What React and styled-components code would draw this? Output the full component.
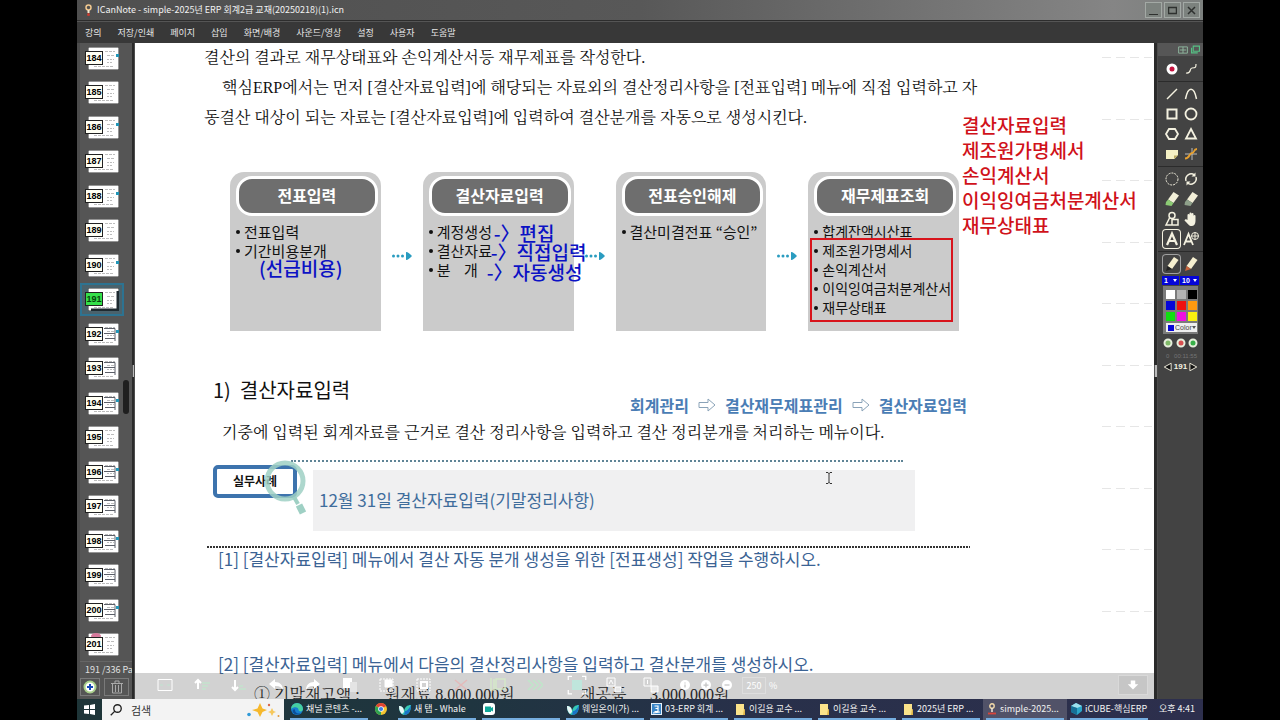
import React from "react";
import styled, { createGlobalStyle } from "styled-components";

const GlobalStyle = createGlobalStyle`
  * {
    box-sizing: border-box;
  }
  body {
    margin: 0;
    background: #000;
    font-family: "Noto Sans CJK KR", sans-serif;
  }
  button,
  select,
  input {
    font-family: inherit;
    padding: 0;
    margin: 0;
    border: none;
    background: none;
    color: inherit;
    border-radius: 0;
  }
  svg {
    display: block;
  }
`;

const Shell = styled.div`
  height: 100vh;
  margin: 0 77px;
  display: flex;
  flex-direction: column;
  overflow: hidden;
  background: #434343;
`;

const TitleBar = styled.header`
  flex: none;
  height: 21px;
  display: flex;
  align-items: center;
  gap: 4px;
  padding: 0 3px 0 7px;
  color: #f2f2f2;
  background: linear-gradient(90deg, #4f4f4f 0%, #585858 50%, #858585 92%, #7b7f7d 100%);
  border-bottom: 1px solid #2d2d2d;
`;

const Title = styled.h1`
  flex: 1;
  margin: 0;
  font-size: 9px;
  font-weight: 400;
  line-height: 20px;
  white-space: nowrap;
`;

const WindowButton = styled.button`
  width: 17px;
  height: 16px;
  margin-left: -2px;
  border: 1px solid #a3a9a5;
  background: #7c827e;
  color: #2e312f;
  display: flex;
  align-items: center;
  justify-content: center;
`;

const MenuBar = styled.nav`
  flex: none;
  height: 22px;
  display: flex;
  align-items: center;
  gap: 16px;
  padding: 0 8px;
  background: #383838;
  border-top: 1px solid #555;
`;

const MenuItem = styled.button`
  color: #e6e6e6;
  font-size: 9px;
  line-height: 20px;
`;

const Body = styled.div`
  flex: 1;
  min-height: 0;
  display: flex;
`;

const Sidebar = styled.aside`
  position: relative;
  flex: none;
  width: 55px;
  background: #555;
  border-left: 3px solid #4b4b4b;
  display: flex;
  flex-direction: column;
`;

const ThumbList = styled.div`
  flex: 1;
  display: flex;
  flex-direction: column;
  justify-content: space-between;
  padding: 4px 13px 5px 5px;
`;

const Thumb = styled.button`
  position: relative;
  width: 34px;
  height: 23px;
  padding-left: 3px;
  outline: ${(p) => (p.$active ? "2px solid #2d7391" : "none")};
  outline-offset: 3px;
  background: ${(p) => (p.$active ? "#4a626c" : "none")};
  box-shadow: ${(p) => (p.$active ? "0 0 0 3px #4a626c" : "none")};
`;

const ThumbNumber = styled.span`
  position: absolute;
  left: 0;
  top: 4px;
  width: 18px;
  height: 14px;
  border: 1px solid #222;
  background: ${(p) => (p.$active ? "#35e04a" : "#fffff4")};
  color: ${(p) => (p.$active ? "#06420c" : "#000")};
  font: bold 9px/12px "Liberation Sans", sans-serif;
  text-align: center;
`;

const ScrollHandle = styled.div`
  position: absolute;
  right: 3px;
  top: 337px;
  width: 6px;
  height: 34px;
  border-radius: 3px;
  background: #1f1f1f;
`;

const PageCount = styled.div`
  height: 16px;
  padding-left: 5px;
  border-top: 1px solid #666;
  color: #e0e0e0;
  font-size: 9px;
  line-height: 15px;
  white-space: nowrap;
  overflow: hidden;
`;

const SidebarButtons = styled.div`
  height: 22px;
  display: flex;
  gap: 4px;
  padding: 1px 3px 3px 0;
`;

const SidebarButton = styled.button`
  width: ${(p) => p.$width}px;
  border: 1px solid #7a7a7a;
  display: flex;
  align-items: center;
  justify-content: center;
`;

const Divider = styled.div`
  flex: none;
  width: ${(p) => p.$width}px;
  background: #2a2a2a;
  border-right: 1px solid #4c4c4c;
  display: flex;
  align-items: center;
  justify-content: center;
  &::before {
    content: "";
    width: 3px;
    height: 12px;
    background: #bbb;
    border-left: 1px solid #555;
  }
`;

const Page = styled.main`
  position: relative;
  flex: 1;
  min-width: 0;
  overflow: hidden;
  background: #fff;
  padding-left: 69px;
  color: #111;
`;

const Column = styled.div`
  width: 766px;
`;

const Para = styled.p`
  margin: 0;
  padding-left: ${(p) => (p.$indent ? 18 : 0)}px;
  font: 16px/30px "Liberation Serif", "Noto Serif CJK KR", "Noto Sans CJK KR", serif;
  white-space: nowrap;
`;

const Process = styled.section`
  display: flex;
  align-items: stretch;
  margin: 39px 11px 0 26px;
`;

const Card = styled.div`
  position: relative;
  flex: 1;
  height: 159px;
  padding: 4px 3px 0 6px;
  border-radius: 14px 14px 0 0;
  background: #cbcbcb;
`;

const CardTitle = styled.h2`
  margin: 0;
  height: 40px;
  border: 3px solid #fff;
  border-radius: 16px;
  background: #6e6e6e;
  color: #fff;
  font-size: 16px;
  line-height: 32px;
  text-align: center;
`;

const CardList = styled.ul`
  margin: 6px 0 0;
  padding: 0;
  list-style: none;
  font-size: ${(p) => (p.$dense ? 14 : 15)}px;
  line-height: 19px;
  color: #111;
  white-space: pre;
`;

const CardItem = styled.li`
  display: flex;
  align-items: center;
  gap: 4px;
  &::before {
    content: "";
    width: 4px;
    height: 4px;
    border-radius: 50%;
    background: #111;
  }
`;

const Arrow = styled.div`
  flex: none;
  width: 42px;
  padding-top: 8px;
  display: flex;
  align-items: center;
  justify-content: center;
`;

const Note = styled.div`
  position: absolute;
  z-index: 1;
  left: ${(p) => p.$left}px;
  top: ${(p) => p.$top}px;
  color: ${(p) => p.$color};
  font-size: 19px;
  font-weight: 500;
  line-height: ${(p) => p.$line}px;
  white-space: nowrap;
`;

const NoteFrame = styled.div`
  position: absolute;
  left: 2px;
  top: 66px;
  width: 143px;
  height: 84px;
  border: 2px solid #d8141c;
`;

const HeadingRow = styled.div`
  display: flex;
  justify-content: space-between;
  height: 42px;
  margin: 45px 3px 0 9px;
`;

const Heading = styled.h2`
  margin: 0;
  font-size: 20px;
  font-weight: 400;
  line-height: 28px;
  white-space: pre;
`;

const Crumbs = styled.nav`
  align-self: flex-end;
  display: flex;
  align-items: center;
  gap: 9px;
  color: #4a7db5;
  font-size: 16px;
  font-weight: 700;
  line-height: 26px;
`;

const Example = styled.section`
  position: relative;
  display: flex;
  margin: 12px 67px 0 9px;
`;

const ExampleRule = styled.div`
  position: absolute;
  left: 78px;
  right: 0;
  top: 0;
  border-top: 2px dotted #5f8496;
`;

const Badge = styled.div`
  position: relative;
  flex: none;
  width: 84px;
  height: 33px;
  margin: 5px 16px 0 0;
  border: 4px solid #3d73ad;
  border-radius: 5px;
  background: #fff;
  color: #111;
  font-size: 12px;
  font-weight: 700;
  line-height: 24px;
  text-align: center;
`;

const Lens = styled.svg`
  position: absolute;
  left: 44px;
  top: -12px;
`;

const ExampleBox = styled.div`
  flex: none;
  width: 602px;
  height: 61px;
  margin-top: 10px;
  padding-left: 6px;
  background: #f0f0f1;
  color: #3f6d9c;
  font-size: 17px;
  line-height: 60px;
  white-space: nowrap;
`;

const Rule = styled.div`
  height: 2px;
  margin: 15px 0 0 3px;
  background: repeating-linear-gradient(90deg, #333 0 2px, #fff 2px 3px);
`;

const Task = styled.p`
  margin: 0 0 83px;
  padding-left: 14px;
  color: #3b6394;
  font-size: 17px;
  line-height: 22px;
  white-space: nowrap;
`;

const Stock = styled.div`
  display: grid;
  grid-template-columns: 131px 195px 70px 1fr;
  margin: -77px 0 0 50px;
  font: 16px/28px "Liberation Serif", "Noto Serif CJK KR", "Noto Sans CJK KR", serif;
  white-space: pre;
`;

const Guides = styled.div`
  position: absolute;
  right: 2px;
  top: 14px;
  width: 50px;
  height: 555px;
  display: flex;
  flex-direction: column;
  justify-content: space-between;
`;

const Guide = styled.div`
  height: 1px;
  background: repeating-linear-gradient(90deg, #e6e6e6 0 9px, transparent 9px 14px);
`;

const PageTools = styled.div`
  position: absolute;
  left: 0;
  right: 0;
  bottom: 0;
  height: 26px;
  display: flex;
  align-items: center;
  gap: 5px;
  padding: 0 6px 2px 11px;
  background: rgba(80, 80, 80, 0.26);
  color: #fff;
`;

const ToolGroup = styled.div`
  flex: none;
  display: flex;
`;

const PageTool = styled.button`
  width: ${(p) => (p.$small ? 21 : 37)}px;
  height: 22px;
  display: flex;
  align-items: center;
  justify-content: center;
`;

const ZoomLabel = styled.label`
  flex: 1;
  display: flex;
  align-items: center;
  gap: 3px;
  font-size: 9px;
`;

const ZoomInput = styled.input`
  width: 24px;
  height: 17px;
  border: 1px solid #dedede;
  font-size: 9px;
  text-align: center;
`;

const DownButton = styled.button`
  width: 30px;
  height: 20px;
  background: #c6c6c6;
  border: 1px solid #d9d9d9;
  display: flex;
  align-items: center;
  justify-content: center;
`;

const TextCursor = styled.svg`
  position: absolute;
  left: 690px;
  top: 429px;
`;

const Palette = styled.aside`
  flex: none;
  width: 45px;
  background: #434343;
  color: #f4f1e0;
`;

const PaletteHeader = styled.div`
  height: 13px;
  display: flex;
  align-items: center;
  justify-content: flex-end;
  gap: 3px;
  padding-right: 3px;
  margin-bottom: 3px;
  background: #565656;
`;

const ToolGrid = styled.div`
  display: grid;
  grid-template-columns: 19px 19px;
  padding: 0 4px 2px;
  margin-bottom: 2px;
  border-bottom: ${(p) => (p.$last ? "none" : "1px solid #2b2b2b")};
`;

const Tool = styled.button`
  height: 20px;
  display: flex;
  align-items: center;
  justify-content: center;
  border-radius: 4px;
  box-shadow: ${(p) => (p.$on ? "inset 0 0 0 1px " + p.$on : "none")};
`;

const Picks = styled.div`
  display: grid;
  grid-template-columns: 17px 19px;
  gap: 1px;
  margin: -2px 4px 1px;
`;

const Pick = styled.label`
  position: relative;
  height: 9px;
  display: flex;
  align-items: center;
  background: ${(p) => (p.$light ? "#efefef" : "#0505d8")};
  color: ${(p) => (p.$light ? "#444" : "#fff")};
  svg {
    position: absolute;
    right: 2px;
  }
`;

const PickSelect = styled.select`
  appearance: none;
  width: 100%;
  height: 9px;
  padding-left: ${(p) => (p.$light ? 1 : 2)}px;
  font: 7px/9px "Liberation Sans", sans-serif;
  font-weight: ${(p) => (p.$light ? 400 : 700)};
`;

const Swatches = styled.div`
  display: grid;
  grid-template-columns: repeat(3, 9px);
  gap: 2px;
  padding: 4px 2px 2px 3px;
  margin: 0 5px;
  background: #7b7b7b;
`;

const Swatch = styled.button`
  height: 9px;
  background: ${(p) => p.$color};
`;

const ColorRow = styled.div`
  grid-column: 1 / -1;
  display: flex;
  align-items: center;
  background: #efefef;
  padding-left: 2px;
  &::before {
    content: "";
    width: 6px;
    height: 6px;
    background: #0505d8;
  }
`;

const Dots = styled.div`
  display: flex;
  justify-content: space-between;
  padding: 4px 5px 3px;
`;

const Timer = styled.div`
  display: flex;
  justify-content: space-between;
  padding: 0 6px 0 8px;
  font: 6px/10px "Liberation Sans", sans-serif;
  color: #747474;
`;

const Pager = styled.div`
  display: flex;
  align-items: center;
  justify-content: space-between;
  padding: 1px 5px;
  font: bold 8px/10px "Liberation Sans", sans-serif;
`;

const Taskbar = styled.footer`
  flex: none;
  height: 21px;
  display: flex;
  background: linear-gradient(90deg, #1e3538 0%, #1f3540 35%, #28304a 60%, #2d2f4d 100%);
  color: #f2f2f2;
`;

const StartButton = styled.button`
  width: 25px;
  display: flex;
  align-items: center;
  justify-content: center;
`;

const SearchBox = styled.label`
  flex: none;
  width: 182px;
  margin-right: 6px;
  display: flex;
  align-items: center;
  gap: 9px;
  padding: 0 4px 0 8px;
  background: #f3f3f3;
  color: #222;
`;

const SearchInput = styled.input`
  flex: 1;
  min-width: 0;
  font-size: 11px;
  line-height: 18px;
  &::placeholder {
    color: #333;
    opacity: 1;
  }
`;

const TaskButton = styled.button`
  flex: none;
  width: ${(p) => (p.$icon ? 18 : 78)}px;
  margin-right: 6px;
  display: flex;
  align-items: center;
  gap: 3px;
  padding: 0 0 0 1px;
  border-bottom: 2px solid ${(p) => (p.$icon ? "transparent" : "#76aee0")};
  background: ${(p) => (p.$active ? "#515268" : "none")};
  box-shadow: ${(p) => (p.$active ? "0 0 0 3px #515268" : "none")};
  font-size: 9px;
  line-height: 18px;
  white-space: nowrap;
  svg {
    flex: none;
  }
`;

const Clock = styled.time`
  margin: 0 8px 0 auto;
  font-size: 9px;
  line-height: 19px;
  white-space: nowrap;
`;

const MENU = ["강의", "저장/인쇄", "페이지", "삽입", "화면/배경", "사운드/영상", "설정", "사용자", "도움말"];

const PAGES = Array.from({ length: 18 }, (_, i) => 184 + i);
const MARKED = [184, 186, 188, 190, 192, 194, 196, 198, 200];
const TABLES = [192, 193, 194, 196, 197, 198, 199, 200];

const COLORS = ["#ffffff", "#b4b4b4", "#000000", "#0505d8", "#f01010", "#ff9a10", "#10e010", "#f010e0", "#f8f010"];

const stroke = { fill: "none", stroke: "currentColor", strokeWidth: 1.5 };

function Icon({ size = 16, children, ...rest }) {
  return (
    <svg width={size} height={size} viewBox="0 0 16 16" {...stroke} aria-hidden="true" {...rest}>
      {children}
    </svg>
  );
}

// the shaft runs from top right to the tip at bottom left
function Pencil({ tip, body = "#f6f0d0" }) {
  return (
    <Icon stroke="none">
      <path d="M10 1 L14.5 4 L8 13 L3.5 10 Z" fill={body} />
      <path d="M3.5 10 L8 13 L2 15 Z" fill={tip} />
    </Icon>
  );
}

function Eraser({ tip }) {
  return (
    <Icon stroke="none">
      <path d="M9.500 1 L15 4.500 L9.500 12 L4 8.500 Z" fill="#f2efd8" />
      <path d="M4 8.500 L9.500 12 L7.500 15 L1.500 14 L2 11 Z" fill={tip} />
    </Icon>
  );
}

const drawTools = [
  ["선", <Icon><path d="M3 13 L13 3" /></Icon>],
  ["곡선", <Icon><path d="M2.500 13 C5 0 11 0 13.500 13" /></Icon>],
  ["사각형", <Icon strokeWidth="2"><path d="M3.500 3.500 H12.500 V12.500 H3.500 Z" /></Icon>],
  ["원", <Icon strokeWidth="1.800"><circle cx="8" cy="8" r="5.500" /></Icon>],
  ["육각형", <Icon strokeWidth="1.800"><path d="M5 3 H11 L14 8 L11 13 H5 L2 8 Z" /></Icon>],
  ["삼각형", <Icon strokeWidth="1.800"><path d="M8 3 L13 12.500 H3 Z" /></Icon>],
  ["메모", <Icon stroke="none"><path d="M2 4 H14 V9 L10.500 13 H2 Z" fill="#f4f0c4" /><path d="M10 13 V9.500 H14" fill="#b8a860" /></Icon>],
  ["그래프", <Icon strokeWidth="1"><path d="M9 2 V14 M2 8 H14" stroke="#bbb" /><path d="M2 12.500 C7 12.500 6 7 9 7 S10 3 14 3" stroke="#e6a030" strokeWidth="1.800" /></Icon>],
];

const editTools = [
  ["영역 선택", <Icon strokeWidth="1"><circle cx="8" cy="8" r="6" strokeDasharray="2 1" /></Icon>],
  ["회전", <Icon><path d="M3 10 A5.500 5.500 0 0 1 11.500 4 M13 6 A5.500 5.500 0 0 1 4.500 12" /><path d="M12.500 1.500 V5.500 H8.500 Z M3.500 14.500 V10.500 H7.500 Z" fill="currentColor" stroke="none" /></Icon>],
  ["지우개", <Eraser tip="#8ccb74" />],
  ["부분 지우개", <Eraser tip="#8ea08a" />],
  ["도형", <Icon strokeWidth="1.500"><circle cx="8" cy="4.500" r="3" /><path d="M5.500 7 L2 14 H8 M8 8.500 H14 V14 H8 Z" /></Icon>],
  ["손", <Icon stroke="none" fill="currentColor"><path d="M4.500 9 V4 a1 1 0 0 1 2 0 V7 V2.500 a1 1 0 0 1 2 0 V7 V3 a1 1 0 0 1 2 0 V8 V5 a1 1 0 0 1 2 0 V10 C12.500 13 11 15 8.500 15 C6 15 5 13 1.500 9.500 C2 8 3.500 8 4.500 9 Z" /></Icon>],
  ["글자", <Icon strokeWidth="2.200"><path d="M3 14 L8 2.500 L13 14 M5 10 H11" /></Icon>, "#f4f1e0"],
  ["웹 글자", <Icon strokeWidth="1.800"><path d="M1 14 L5.500 3 L10 14 M3 10.500 H8" /><circle cx="12" cy="5" r="3.500" strokeWidth="1" /><path d="M8.500 5 H15.500 M12 1.500 V8.500" strokeWidth="1" /></Icon>],
];

const pageTools = [
  ["폭 맞춤", <Icon strokeWidth="1"><path d="M1 2.500 H15 V13.500 H1 Z" /><path d="M3 8 H6 M10 8 H13" stroke="#bfe3cf" /></Icon>],
  ["위로", <Icon><path d="M4 12 V4 M1 6 L4 3 L7 6" strokeWidth="2" /><path d="M8 6 H16 M8 9 H14 M8 12 H12" stroke="#c4e3cd" /></Icon>],
  ["아래로", <Icon><path d="M4 3 V12 M1 10 L4 13 L7 10" strokeWidth="2" /><path d="M8 12 H15 M8 9 H12" stroke="#c4e3cd" /></Icon>],
  ["실행 취소", <Icon stroke="none" fill="currentColor"><path d="M7 2 L1 7 L7 12 V9 C11 8.500 13 10 15 13 C15 8 12 5 7 5 Z" /></Icon>],
  ["다시 실행", <Icon stroke="none" fill="currentColor"><path d="M9 2 L15 7 L9 12 V9 C5 8.500 3 10 1 13 C1 8 4 5 9 5 Z" /></Icon>],
  ["복사", <Icon stroke="none"><path d="M1 1 H10 V11 H1 Z" fill="#fff" /><path d="M8 5 H15 V15 H8 Z" fill="#e4e4e4" /></Icon>],
  ["붙여넣기", <Icon strokeWidth="1"><path d="M1 2 H14 V14 H1 Z" strokeDasharray="2 1" /><path d="M6 3 H13 V10 H6 Z" fill="#fff" /></Icon>],
  ["묶기", <Icon strokeWidth="1"><path d="M1 2 H14 V14 H1 Z" strokeDasharray="2 1" /><path d="M5 5 H11 V11 H5 Z" strokeWidth="2" /></Icon>],
  ["삭제", <Icon stroke="#e3b9b9"><path d="M2 3 L14 13 M14 3 L2 13" /></Icon>],
  ["페이지 복제", <Icon stroke="#d5e8c9"><path d="M1 1 V14 M4 2 V14 M6 2 H15 V12 H6 Z" /></Icon>],
  ["다음", <Icon stroke="#bfe6c9"><path d="M1 3 L6 8 L1 13 M6 3 L11 8 L6 13 M11 3 L16 8 L11 13" /></Icon>],
];

const viewTools = [
  ["전체 화면", <Icon size={20} strokeWidth="1"><path d="M1 4 V1 H4 M12 1 H15 V4 M15 12 V15 H12 M4 15 H1 V12" /><path d="M4 4 H12 V12 H4 Z" fill="#bfe6dc" stroke="none" /></Icon>],
  ["글자 정렬", <Icon strokeWidth="1"><path d="M1 1 H9 V9 H1 Z M3 7 L5 3 L7 7" /><path d="M9 10 H15 V15 H9 Z" fill="#e8e8e8" /></Icon>],
  ["번호 정렬", <Icon strokeWidth="1"><path d="M1 1 H8 V9 H1 Z M4.500 3 V7" /><path d="M8 9 H15 V15 H8 Z" fill="#e8e8e8" /></Icon>],
];

const roundTools = [
  ["정보", "M8 4 V5.500 M8 7 V12"],
  ["확대", "M8 4 V12 M4 8 H12"],
  ["축소", "M4 8 H12"],
];

function Caret({ color = "#fff" }) {
  return (
    <svg width="4" height="3" aria-hidden="true">
      <path d="M0 0 H4 L2 3 Z" fill={color} />
    </svg>
  );
}

function FlowArrow() {
  return (
    <Arrow>
      <svg width="20" height="8" fill="#2a9cc0" aria-hidden="true">
        <circle cx="1.500" cy="4" r="1.500" />
        <circle cx="6" cy="4" r="1.500" />
        <circle cx="10.500" cy="4" r="1.500" />
        <path d="M14 0 C16 0 18 2 20 4 C18 6 16 8 14 8 Z" />
      </svg>
    </Arrow>
  );
}

function CrumbArrow() {
  return (
    <svg width="18" height="14" fill="#fff" stroke="#8aa3b8" aria-hidden="true">
      <path d="M1 4.500 H10 V1 L17 7 L10 13 V9.500 H1 Z" />
    </svg>
  );
}

function ThumbImage({ n }) {
  return (
    <svg width="31" height="23" aria-hidden="true">
      <rect width="31" height="23" fill="#fff" stroke="#2a2a2a" />
      <g stroke="#bdbdbd" strokeWidth="1">
        <path d="M17 4.500 H27 M19 8.500 H27 M6 19.500 H26" strokeDasharray="3 1" />
        <path d="M19 12.500 H26 M19 15.500 H25" strokeDasharray="2 1" />
      </g>
      {TABLES.includes(n) && <path d="M16 5.500 H27 V18 M16 10.500 H27 M17 15.500 H27" fill="none" stroke="#5b5f68" />}
      {MARKED.includes(n) && <rect x="28" y="7" width="3" height="3" fill="#2196b8" />}
      {n === 201 && <ellipse cx="8" cy="3" rx="5" ry="3" fill="#d77a9b" />}
      {n === 191 && <path d="M3 22 H30 V3" fill="none" stroke="#1e2a30" strokeWidth="3" />}
    </svg>
  );
}

const Edge = () => (
  <svg width="12" height="12" viewBox="0 0 12 12" aria-hidden="true">
    <circle cx="6" cy="6" r="6" fill="#1680d0" />
    <path d="M0 6 A6 6 0 0 1 12 6 C12 9 8 9 7.500 7 C8 4 3 3 0 6 Z" fill="#46cfa0" />
    <path d="M4 7 C4 10 7 11.500 10 10 C8 12.500 2 12 1.500 8 C2 6 4 5.500 4 7 Z" fill="#0c4f98" />
  </svg>
);

const Chrome = () => (
  <svg width="12" height="12" viewBox="0 0 12 12" aria-hidden="true">
    <circle cx="6" cy="6" r="6" fill="#f4c531" />
    <path d="M6 6 L0.800 3 A6 6 0 0 1 11.200 3 Z" fill="#e04434" />
    <path d="M6 6 L0.800 3 A6 6 0 0 0 6 12 Z" fill="#2ea352" />
    <circle cx="6" cy="6" r="2.800" fill="#fff" />
    <circle cx="6" cy="6" r="2.100" fill="#3c7de6" />
  </svg>
);

const Whale = () => (
  <svg width="12" height="12" viewBox="0 0 12 12" aria-hidden="true">
    <path d="M0 3 C3 3 5 5 5 8 C6 4 8 2 12 2 C12 8 10 12 5 12 C1 11 0 7 0 3 Z" fill="#35c8b8" />
    <path d="M0 3 C3 3 5 5 5 9 L3 11 C1 9 0 7 0 3 Z" fill="#e8f6f6" />
    <path d="M6 8 C8 8 10 6 12 2 C12 9 9 12 5 12 Z" fill="#1a74c8" />
  </svg>
);

const Meet = () => (
  <svg width="12" height="12" viewBox="0 0 12 12" aria-hidden="true">
    <rect width="12" height="12" rx="3" fill="#fff" />
    <path d="M2 3.500 H8 V5 L10 4 V8.500 L8 7.500 V9 H2 Z" fill="#10a89a" />
  </svg>
);

const ErpBook = () => (
  <svg width="11" height="12" viewBox="0 0 11 12" aria-hidden="true">
    <rect width="11" height="12" fill="#e6f1fa" />
    <rect x="1" y="1" width="9" height="10" fill="#3a86c8" />
    <path d="M3.500 3 H7 V5.500 H4.500 M7 5.500 V8.500 H3.500 M2 10 L9 9" fill="none" stroke="#fff" strokeWidth="1.200" />
  </svg>
);

const Folder = () => (
  <svg width="11" height="12" viewBox="0 0 11 12" aria-hidden="true">
    <path d="M1 1 H9 V6 L10 7 V12 H1 Z" fill="#fbe38a" />
    <path d="M9 6 L10 7 V12 H8 Z" fill="#e0b64a" />
  </svg>
);

const NoteApp = () => (
  <svg width="10" height="12" viewBox="0 0 10 12" aria-hidden="true">
    <circle cx="5" cy="3" r="2.200" fill="none" stroke="#f1d9a8" strokeWidth="1.400" />
    <path d="M5 5 V9" stroke="#f0e8d8" strokeWidth="1.500" />
    <path d="M1 10.500 H9" stroke="#d8453a" strokeWidth="1.800" />
  </svg>
);

const Icube = () => (
  <svg width="11" height="12" viewBox="0 0 11 12" aria-hidden="true">
    <path d="M5 0 L11 3 V8 L6 12 L0 9 V3 Z" fill="#2aa5c8" />
    <path d="M5 0 L11 3 L6 5 L0 3 Z" fill="#9de0ee" />
    <path d="M6 5 V12 L0 9 V3 Z" fill="#176f96" />
  </svg>
);

const TASKS = [
  { icon: <Edge />, label: "채널 콘텐츠 -..." },
  { icon: <Chrome />, only: true },
  { icon: <Whale />, label: "새 탭 - Whale" },
  { icon: <Meet />, label: "" },
  { icon: <Whale />, label: "웨일온이(가) ..." },
  { icon: <ErpBook />, label: "03-ERP 회계 ..." },
  { icon: <Folder />, label: "이길용 교수 ..." },
  { icon: <Folder />, label: "이길용 교수 ..." },
  { icon: <Folder />, label: "2025년 ERP ..." },
  { icon: <NoteApp />, label: "simple-2025...", active: true },
  { icon: <Icube />, label: "iCUBE-핵심ERP" },
];

function PageSidebar() {
  return (
    <Sidebar>
      <ThumbList>
        {PAGES.map((n) => (
          <Thumb key={n} $active={n === 191}>
            <ThumbImage n={n} />
            <ThumbNumber $active={n === 191}>{n}</ThumbNumber>
          </Thumb>
        ))}
      </ThumbList>
      <ScrollHandle />
      <PageCount>191 /336 Pa</PageCount>
      <SidebarButtons>
        <SidebarButton $width={20} aria-label="페이지 추가">
          <svg width="14" height="14" viewBox="0 0 14 14" aria-hidden="true">
            <circle cx="7" cy="7" r="5.500" fill="#fff" stroke="#a9cf8b" strokeWidth="2" />
            <path d="M7 4 V10 M4 7 H10" stroke="#1548b8" strokeWidth="2" />
          </svg>
        </SidebarButton>
        <SidebarButton $width={25} aria-label="페이지 삭제">
          <svg width="14" height="14" viewBox="0 0 14 14" fill="none" stroke="#a9a9a9" aria-hidden="true">
            <path d="M1 3.500 H13 M5 3 V1 H9 V3 M2.500 4 V13 H11.500 V4 M5.500 5 V12 M8.500 5 V12" />
          </svg>
        </SidebarButton>
      </SidebarButtons>
    </Sidebar>
  );
}

function DocumentPage() {
  return (
    <Page>
      <Column>
        <Para>결산의 결과로 재무상태표와 손익계산서등 재무제표를 작성한다.</Para>
        <Para $indent>
          핵심ERP에서는 먼저 [결산자료입력]에 해당되는 자료외의 결산정리사항을 [전표입력] 메뉴에 직접 입력하고 자
        </Para>
        <Para>동결산 대상이 되는 자료는 [결산자료입력]에 입력하여 결산분개를 자동으로 생성시킨다.</Para>

        <Process>
          <Card>
            <CardTitle>전표입력</CardTitle>
            <CardList>
              <CardItem>전표입력</CardItem>
              <CardItem>기간비용분개</CardItem>
            </CardList>
            <Note $left={29} $top={86} $line={20} $color="#0b12c4">(선급비용)</Note>
          </Card>
          <FlowArrow />
          <Card>
            <CardTitle>결산자료입력</CardTitle>
            <CardList>
              <CardItem>계정생성</CardItem>
              <CardItem>결산자료</CardItem>
              <CardItem>분    개</CardItem>
            </CardList>
            <Note $left={71} $top={51} $line={20} $color="#0b12c4">-〉편집</Note>
            <Note $left={68} $top={70} $line={20} $color="#0b12c4">-〉직접입력</Note>
            <Note $left={64} $top={90} $line={20} $color="#0b12c4">-〉자동생성</Note>
          </Card>
          <FlowArrow />
          <Card>
            <CardTitle>전표승인해제</CardTitle>
            <CardList>
              <CardItem>결산미결전표 “승인”</CardItem>
            </CardList>
          </Card>
          <FlowArrow />
          <Card>
            <CardTitle>재무제표조회</CardTitle>
            <CardList $dense>
              <CardItem>합계잔액시산표</CardItem>
              <CardItem>제조원가명세서</CardItem>
              <CardItem>손익계산서</CardItem>
              <CardItem>이익잉여금처분계산서</CardItem>
              <CardItem>재무상태표</CardItem>
            </CardList>
            <NoteFrame />
          </Card>
        </Process>

        <HeadingRow>
          <Heading>1)  결산자료입력</Heading>
          <Crumbs>
            <span>회계관리</span>
            <CrumbArrow />
            <span>결산재무제표관리</span>
            <CrumbArrow />
            <span>결산자료입력</span>
          </Crumbs>
        </HeadingRow>
        <Para $indent>기중에 입력된 회계자료를 근거로 결산 정리사항을 입력하고 결산 정리분개를 처리하는 메뉴이다.</Para>

        <Example>
          <ExampleRule />
          <Badge>
            실무사례
            <Lens width="50" height="58" viewBox="0 0 50 58" fill="none" stroke="#9fd0c4" aria-hidden="true">
              <circle cx="24" cy="24" r="18" strokeWidth="5" strokeOpacity="0.85" />
              <path d="M33 40 L37 47" strokeWidth="4" />
              <path d="M38 48 L42 56" strokeWidth="7" />
            </Lens>
          </Badge>
          <ExampleBox>12월 31일 결산자료입력(기말정리사항)</ExampleBox>
        </Example>
        <Rule />
        <Task>[1] [결산자료입력] 메뉴에서 결산 자동 분개 생성을 위한 [전표생성] 작업을 수행하시오.</Task>
        <Task>[2] [결산자료입력] 메뉴에서 다음의 결산정리사항을 입력하고 결산분개를 생성하시오.</Task>
        <Stock>
          <span>① 기말재고액 :</span>
          <span>원재료 8,000,000원</span>
          <span>재공품</span>
          <span>3,000,000원</span>
        </Stock>
      </Column>

      <Note $left={827} $top={69} $line={25} $color="#d0121a">
        결산자료입력
        <br />
        제조원가명세서
        <br />
        손익계산서
        <br />
        이익잉여금처분계산서
        <br />
        재무상태표
      </Note>

      <Guides>
        {Array.from({ length: 10 }, (_, i) => (
          <Guide key={i} />
        ))}
      </Guides>

      <TextCursor width="8" height="12" fill="none" stroke="#333" aria-hidden="true">
        <path d="M1 0.500 H3 L4 1.500 L5 0.500 H7 M4 1 V11 M1 11.500 H3 L4 10.500 L5 11.500 H7" />
      </TextCursor>

      <PageTools>
        <ToolGroup>
          {pageTools.map(([name, icon]) => (
            <PageTool key={name} aria-label={name}>
              {icon}
            </PageTool>
          ))}
        </ToolGroup>
        <ToolGroup>
          {viewTools.map(([name, icon]) => (
            <PageTool key={name} aria-label={name}>
              {icon}
            </PageTool>
          ))}
        </ToolGroup>
        <ToolGroup>
          {roundTools.map(([name, d]) => (
            <PageTool key={name} $small aria-label={name}>
              <Icon size={10}>
                <circle cx="8" cy="8" r="8" fill="#fff" stroke="none" />
                <path d={d} stroke="#c4c4c4" strokeWidth="2" />
              </Icon>
            </PageTool>
          ))}
        </ToolGroup>
        <ZoomLabel>
          <ZoomInput type="text" defaultValue="250" aria-label="배율" />%
        </ZoomLabel>
        <DownButton aria-label="아래로 이동">
          <Icon size={12} stroke="none" fill="#fff">
            <path d="M5 2 H11 V7 H15 L8 14 L1 7 H5 Z" />
          </Icon>
        </DownButton>
      </PageTools>
    </Page>
  );
}

function ToolPalette() {
  return (
    <Palette>
      <PaletteHeader>
        <Icon size={10} stroke="#8fb89f">
          <path d="M1 3 H15 V13 H1 Z M8 3 V13 M3 8 H13" />
        </Icon>
        <Icon size={9} stroke="#56c084">
          <path d="M4 2 H15 V11 H4 Z M1 5 V14 H12" strokeWidth="2" />
        </Icon>
      </PaletteHeader>
      <ToolGrid>
        <Tool aria-label="녹화">
          <Icon stroke="none">
            <circle cx="8" cy="8" r="5.500" fill="#fff" />
            <circle cx="8" cy="8" r="2.500" fill="#c81440" />
          </Icon>
        </Tool>
        <Tool aria-label="자유선">
          <Icon>
            <path d="M3 12 C9 13 6 7 9 7 C13 7 13 6 13 3" strokeWidth="1.200" />
          </Icon>
        </Tool>
      </ToolGrid>
      <ToolGrid>
        {drawTools.map(([name, icon]) => (
          <Tool key={name} aria-label={name}>
            {icon}
          </Tool>
        ))}
      </ToolGrid>
      <ToolGrid>
        {editTools.map(([name, icon, on]) => (
          <Tool key={name} aria-label={name} $on={on}>
            {icon}
          </Tool>
        ))}
      </ToolGrid>
      <ToolGrid $last>
        <Tool aria-label="펜" $on="#a0a0a0">
          <Pencil tip="#222" />
        </Tool>
        <Tool aria-label="형광펜">
          <Pencil tip="#c8643c" />
        </Tool>
      </ToolGrid>
      <Picks>
        <Pick>
          <PickSelect aria-label="굵기">
            <option>1</option>
          </PickSelect>
          <Caret />
        </Pick>
        <Pick>
          <PickSelect aria-label="형광펜 굵기">
            <option>10</option>
          </PickSelect>
          <Caret />
        </Pick>
      </Picks>
      <Swatches>
        {COLORS.map((c) => (
          <Swatch key={c} $color={c} aria-label={c} />
        ))}
        <ColorRow>
          <Pick $light>
            <PickSelect $light aria-label="색">
              <option>Color</option>
            </PickSelect>
          </Pick>
          <Caret color="#555" />
        </ColorRow>
      </Swatches>
      <Dots>
        {["#7fba68", "#d85050", "#38b048"].map((c) => (
          <svg key={c} width="10" height="10" aria-hidden="true">
            <circle cx="5" cy="5" r="3.500" fill={c} stroke="#e6eedc" strokeWidth="2" />
          </svg>
        ))}
      </Dots>
      <Timer>
        <span>0</span>
        <span>00:11:55</span>
      </Timer>
      <Pager>
        <button aria-label="이전 페이지">
          <Icon size={10} fill="#111">
            <path d="M13 2 V14 L2 8 Z" />
          </Icon>
        </button>
        191
        <button aria-label="다음 페이지">
          <Icon size={10} fill="#111">
            <path d="M3 2 V14 L14 8 Z" />
          </Icon>
        </button>
      </Pager>
    </Palette>
  );
}

export default function App() {
  return (
    <>
      <GlobalStyle />
      <Shell>
        <TitleBar>
          <svg width="9" height="12" viewBox="0 0 9 12" aria-hidden="true">
            <circle cx="4.500" cy="3.500" r="2.500" fill="none" stroke="#f0c890" strokeWidth="1.500" />
            <path d="M4.500 6 V9" stroke="#f6ead0" strokeWidth="2" />
            <circle cx="4.500" cy="10.500" r="1.500" fill="#c83c30" />
          </svg>
          <Title>ICanNote - simple-2025년 ERP 회계2급 교재(20250218)(1).icn</Title>
          <WindowButton aria-label="최소화">
            <svg width="9" height="9" stroke="currentColor" aria-hidden="true">
              <path d="M0 8.500 H9" />
            </svg>
          </WindowButton>
          <WindowButton aria-label="최대화">
            <svg width="9" height="9" fill="none" stroke="currentColor" aria-hidden="true">
              <path d="M0.500 1.500 H8.500 V7.500 H0.500 Z" strokeWidth="1.500" />
            </svg>
          </WindowButton>
          <WindowButton aria-label="닫기">
            <svg width="9" height="9" stroke="currentColor" aria-hidden="true">
              <path d="M1 1 L8 8 M8 1 L1 8" strokeWidth="1.500" />
            </svg>
          </WindowButton>
        </TitleBar>
        <MenuBar>
          {MENU.map((m) => (
            <MenuItem key={m}>{m}</MenuItem>
          ))}
        </MenuBar>
        <Body>
          <PageSidebar />
          <Divider $width={3} />
          <DocumentPage />
          <Divider $width={4} />
          <ToolPalette />
        </Body>
        <Taskbar>
          <StartButton aria-label="시작">
            <svg width="11" height="11" fill="#fff" aria-hidden="true">
              <path d="M0 1.500 L5 1 V5 H0 Z M6 1 L11 0 V5 H6 Z M0 6 H5 V10 L0 9.500 Z M6 6 H11 V11 L6 10 Z" />
            </svg>
          </StartButton>
          <SearchBox>
            <Icon size={12} strokeWidth="1.800">
              <circle cx="10" cy="6" r="5" />
              <path d="M6.500 9.500 L1 15" />
            </Icon>
            <SearchInput type="text" placeholder="검색" aria-label="검색" />
            <svg width="34" height="16" aria-hidden="true">
              <path d="M14 1 L16.500 6.500 L21 8 L16.500 10 L14 15 L11.500 10 L6 8 L11.500 6.500 Z" fill="#f6b82c" />
              <path d="M26 6 L27.500 9 L30 10 L27.500 11 L26 14 L24.500 11 L22 10 L24.500 9 Z" fill="#f6c85c" />
              <circle cx="3" cy="12.500" r="1.800" fill="#2f9ad8" />
              <circle cx="23" cy="3" r="1.200" fill="#d8684a" />
              <circle cx="32.500" cy="14" r="1" fill="#e09a3a" />
            </svg>
          </SearchBox>
          {TASKS.map((t, i) => (
            <TaskButton key={i} $icon={t.only} $active={t.active} aria-label={t.label || "앱"}>
              {t.icon}
              {t.label}
            </TaskButton>
          ))}
          <Clock>오후 4:41</Clock>
        </Taskbar>
      </Shell>
    </>
  );
}
